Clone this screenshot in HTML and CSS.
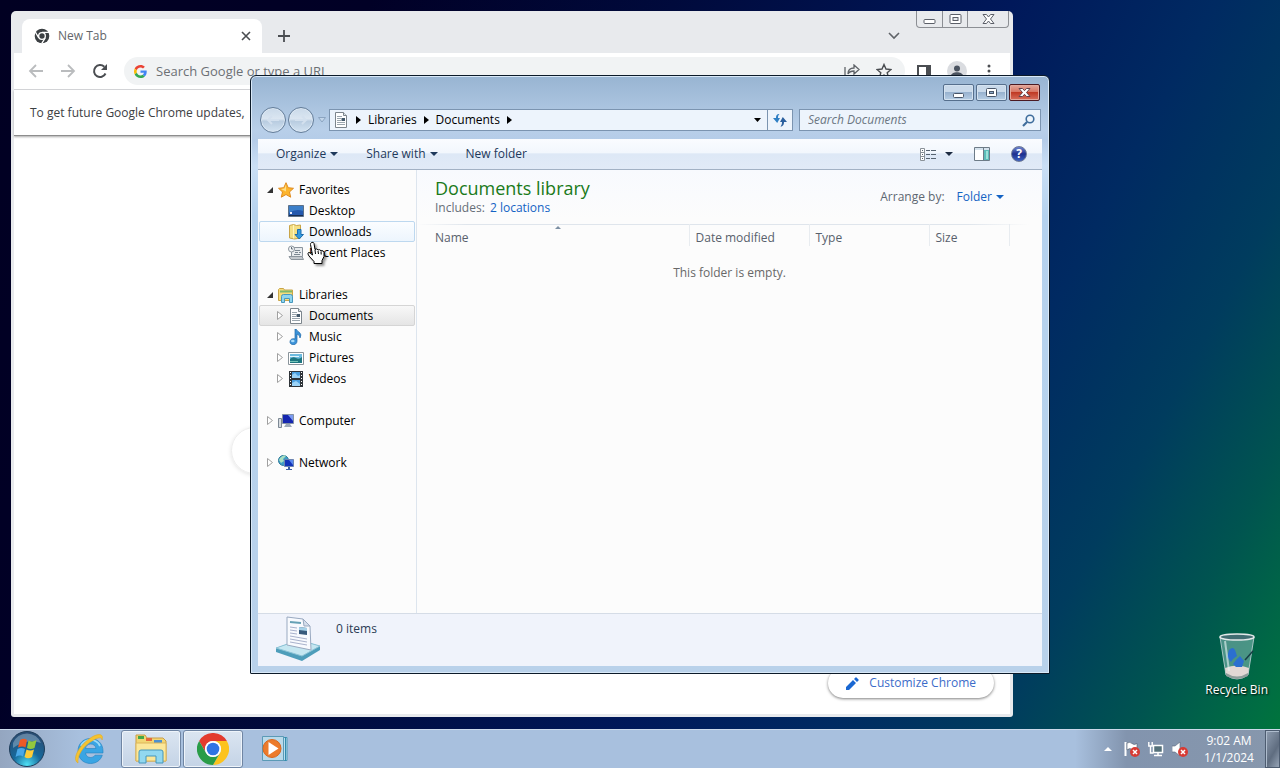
FILE: index.html
```html
<!DOCTYPE html>
<html lang="en">
<head>
    <meta charset="UTF-8">
    <meta name="viewport" content="width=device-width, initial-scale=1.0">
    <title>Desktop</title>
    <link rel="stylesheet" href="styles.css">
</head>
<body>
    <main class="desktop">
        <!-- Chrome window -->
        <section class="window chrome" aria-label="New Tab">
            <div class="tab-strip">
                <div class="tab">
                    <svg width="16" height="16" viewBox="0 0 48 48"><circle cx="24" cy="24" r="22" fill="#3c4043"/><circle cx="24" cy="24" r="10" fill="none" stroke="#fff" stroke-width="4"/><path d="M24 13h21M14.500 30 4 12M33.500 30 23 47" stroke="#fff" stroke-width="4"/></svg>
                    <span class="tab-title">New Tab</span>
                    <button class="icon-btn" aria-label="Close tab"><svg width="10" height="10" viewBox="0 0 10 10"><path d="M1 1l8 8M9 1L1 9" stroke="#4a4d51" stroke-width="1.600"/></svg></button>
                </div>
                <button class="icon-btn new-tab" aria-label="Open a new tab"><svg width="12" height="12" viewBox="0 0 12 12"><path d="M6 0v12M0 6h12" stroke="#4a4d51" stroke-width="1.800"/></svg></button>
                <button class="icon-btn tab-search" aria-label="Search tabs"><svg width="12" height="8" viewBox="0 0 12 8"><path d="M1 1l5 5 5-5" fill="none" stroke="#5f6368" stroke-width="1.600"/></svg></button>
                <div class="basic-caption">
                    <button aria-label="Minimize"><svg width="13" height="16" viewBox="0 0 13 16"><rect x="1" y="8.500" width="11" height="4" rx="1" fill="#fff" stroke="#5b5f68"/></svg></button>
                    <button aria-label="Maximize"><svg width="13" height="16" viewBox="0 0 13 16"><rect x="1" y="3.500" width="11" height="9" rx="1" fill="#fff" stroke="#5b5f68"/><rect x="4" y="6.500" width="5" height="3" fill="#e8eaed" stroke="#5b5f68"/></svg></button>
                    <button class="wide" aria-label="Close"><svg width="13" height="16" viewBox="0 0 13 16"><path d="M1 3.500h3.500l2 2.500 2-2.500H12L8.500 8l3.500 4.500H8.500l-2-2.500-2 2.500H1L4.500 8z" fill="#fff" stroke="#5b5f68"/></svg></button>
                </div>
            </div>
            <div class="chrome-toolbar">
                <button class="icon-btn" aria-label="Back"><svg width="16" height="16" viewBox="0 0 16 16"><path d="M15 8H2M8 2L2 8l6 6" fill="none" stroke="#babcbe" stroke-width="1.800"/></svg></button>
                <button class="icon-btn" aria-label="Forward"><svg width="16" height="16" viewBox="0 0 16 16"><path d="M1 8h13M8 2l6 6-6 6" fill="none" stroke="#babcbe" stroke-width="1.800"/></svg></button>
                <button class="icon-btn" aria-label="Reload"><svg width="16" height="16" viewBox="0 0 16 16"><path d="M13.500 10.500A6 6 0 1 1 12.300 3.800" fill="none" stroke="#4a4d51" stroke-width="2"/><path d="M15 1v6H9z" fill="#4a4d51"/></svg></button>
                <div class="omnibox">
                    <svg width="13" height="13" viewBox="0 0 48 48"><path fill="#ea4335" d="M24 9.500c3.540 0 6.710 1.220 9.210 3.600l6.850-6.850C35.900 2.380 30.470 0 24 0 14.620 0 6.510 5.380 2.560 13.220l7.980 6.190C12.430 13.720 17.740 9.500 24 9.500z"/><path fill="#4285f4" d="M46.980 24.550c0-1.570-.15-3.090-.38-4.550H24v9.020h12.940c-.58 2.960-2.260 5.480-4.780 7.180l7.730 6c4.510-4.180 7.090-10.360 7.090-17.650z"/><path fill="#fbbc05" d="M10.530 28.590c-.48-1.450-.76-2.990-.76-4.590s.27-3.140.76-4.590l-7.980-6.190C.92 16.460 0 20.120 0 24c0 3.880.92 7.540 2.560 10.780z"/><path fill="#34a853" d="M24 48c6.480 0 11.930-2.130 15.890-5.810l-7.730-6c-2.150 1.450-4.920 2.300-8.160 2.300-6.260 0-11.570-4.220-13.470-9.910l-7.980 6.190C6.510 42.620 14.620 48 24 48z"/></svg>
                    <input type="text" aria-label="Address" placeholder="Search Google or type a URL">
                    <button class="icon-btn" aria-label="Share"><svg width="16" height="14" viewBox="0 0 16 14"><path d="M1 3v10h11v-2M4 10c0-4 2-6 6-6V1l5 4.500-5 4.500V7C7 7 5 8 4 10z" fill="none" stroke="#5f6368" stroke-width="1.300"/></svg></button>
                    <button class="icon-btn" aria-label="Bookmark"><svg width="16" height="16" viewBox="0 0 16 16"><path d="M8 1.500l2 4.500 5 .5-3.800 3.200 1.200 4.800L8 12l-4.400 2.500 1.200-4.800L1 6.500 6 6z" fill="none" stroke="#4a4d51" stroke-width="1.400"/></svg></button>
                </div>
                <button class="icon-btn" aria-label="Side panel"><svg width="14" height="13" viewBox="0 0 14 13"><path d="M1 1h12v11H1z" fill="#fff" stroke="#4a4d51" stroke-width="2"/><path d="M9 1h4v11H9z" fill="#4a4d51"/></svg></button>
                <button class="icon-btn" aria-label="Profile"><svg width="20" height="20" viewBox="0 0 20 20"><circle cx="10" cy="10" r="10" fill="#dadce0"/><circle cx="10" cy="7.500" r="3" fill="#4a5360"/><path d="M4 15c0-5 12-5 12 0z" fill="#4a5360"/></svg></button>
                <button class="icon-btn" aria-label="Menu"><svg width="12" height="16" viewBox="0 0 12 16"><g fill="#4a4d51"><circle cx="6" cy="3" r="1.500"/><circle cx="6" cy="8" r="1.500"/><circle cx="6" cy="13" r="1.500"/></g></svg></button>
            </div>
            <p class="infobar">To get future Google Chrome updates,</p>
            <div class="new-tab-page">
                <div class="search-pill"></div>
                <button class="customize">
                    <svg width="13" height="13" viewBox="0 0 13 13"><path d="M0 13v-3l7-7 3 3-7 7zM8 2l1.500-1.500q.5-.5 1 0l2 2q.5.5 0 1L11 5z" fill="#1967d2"/></svg>
                    Customize Chrome
                </button>
            </div>
        </section>

        <!-- Explorer window -->
        <section class="window explorer" aria-label="Documents">
            <div class="caption">
                <button aria-label="Minimize"><svg width="13" height="15" viewBox="0 0 13 15"><rect x="1.500" y="8.500" width="10" height="4" rx="1" fill="#fff" stroke="#495669"/></svg></button>
                <button aria-label="Maximize"><svg width="13" height="15" viewBox="0 0 13 15"><rect x="1.500" y="3.500" width="10" height="8" rx="1" fill="#fff" stroke="#495669"/><rect x="4.500" y="6.500" width="4" height="2" fill="#8fabc9" stroke="#495669"/></svg></button>
                <button class="close" aria-label="Close"><svg width="13" height="15" viewBox="0 0 13 15"><path d="M1 3.500h3.500l2 2.200 2-2.200H12L8.500 7.500l3.500 4H8.500l-2-2.200-2 2.200H1l3.500-4z" fill="#fff" stroke="#62434c"/></svg></button>
            </div>
            <div class="nav-row">
                <div class="travel">
                    <button class="round" aria-label="Back"><svg width="14" height="12" viewBox="0 0 14 12"><path d="M13 6H2M6 2L2 6l4 4" fill="none" stroke="#d3e0ee" stroke-width="2"/></svg></button>
                    <button class="round" aria-label="Forward"><svg width="14" height="12" viewBox="0 0 14 12"><path d="M1 6h11M8 2l4 4-4 4" fill="none" stroke="#d3e0ee" stroke-width="2"/></svg></button>
                    <button class="icon-btn recent" aria-label="Recent pages"><svg width="8" height="6" viewBox="0 0 8 6"><path d="M.5.500h7L4 5z" fill="#c3d6ea" stroke="#8ba4c0"/></svg></button>
                </div>
                <div class="address">
                    <svg width="16" height="16" viewBox="0 0 16 16"><path d="M2.500.500h8l3 3v12h-11z" fill="#fff" stroke="#7c858c"/><path d="M10.500.500v3h3" fill="#dfe6ea" stroke="#7c858c"/><path d="M4 4.500h5M4 6.500h4M4 8.500h4M4 10.500h8M4 12.500h8" stroke="#9aa5ad"/><path d="M8.500 6h3.500v3H8.500z" fill="#43586a"/></svg>
                    <svg class="crumb-arrow" width="5" height="8" viewBox="0 0 5 8"><path d="M0 0l5 4-5 4z"/></svg>
                    <a href="#libraries">Libraries</a>
                    <svg class="crumb-arrow" width="5" height="8" viewBox="0 0 5 8"><path d="M0 0l5 4-5 4z"/></svg>
                    <a href="#documents">Documents</a>
                    <svg class="crumb-arrow" width="5" height="8" viewBox="0 0 5 8"><path d="M0 0l5 4-5 4z"/></svg>
                    <button class="icon-btn previous" aria-label="Previous locations"><svg width="7" height="4" viewBox="0 0 7 4"><path d="M0 0h7L3.500 4z"/></svg></button>
                    <button class="refresh" aria-label="Refresh"><svg width="14" height="14" viewBox="0 0 14 14"><path d="M6.500 1C3.500 1 3 3 3 5H0l4.200 5L7 5H5c0-2 .3-3 1.500-4z" fill="#2f7fc4"/><path d="M7.500 13.500C10.500 13.500 11 11 11 9h3L9.800 4 7 9h2c0 2-.3 3-1.500 4.500z" fill="#2a5f9e"/></svg></button>
                </div>
                <div class="search">
                    <input type="text" aria-label="Search Documents" placeholder="Search Documents">
                    <svg width="13" height="13" viewBox="0 0 13 13"><circle cx="8" cy="5" r="3.800" fill="#eef5fc" stroke="#3f6d9c" stroke-width="1.600"/><path d="M5 8l-4 4" stroke="#3f6d9c" stroke-width="2.200"/></svg>
                </div>
            </div>

            <div class="client">
                <div class="toolbar">
                    <button>Organize <i class="down"></i></button>
                    <button>Share with <i class="down"></i></button>
                    <button>New folder</button>
                    <div class="toolbar-right">
                        <button aria-label="Change your view"><svg width="16" height="13" viewBox="0 0 16 13"><path d="M.5.500h4v12h-4zM.5 4.500h4M.5 8.500h4" fill="#fff" stroke="#8a9299"/><path d="M6 2.500h4M11 2.500h5M6 6.500h4M11 6.500h5M6 10.500h4M11 10.500h5" stroke="#566370"/><path d="M2 2.500h1M2 6.500h1M2 10.500h1" stroke="#566370"/></svg><i class="down"></i></button>
                        <button aria-label="Show the preview pane"><svg width="16" height="14" viewBox="0 0 16 14"><path d="M.5.500h15v13H.5z" fill="#fff" stroke="#6d7b87"/><path d="M1 1h14v2H1z" fill="#d5e3ee"/><path d="M10 3h5v10h-5z" fill="#5dbdb9"/><path d="M9.500 1v12" stroke="#6d7b87"/><path d="M13 4v8" stroke="#9ce2d9" stroke-width="2"/></svg></button>
                        <button class="help" aria-label="Get help">?</button>
                    </div>
                </div>

                <div class="panes">
                    <nav class="tree">
                        <ul>
                            <li class="root"><svg width="6" height="6" viewBox="0 0 6 6"><path d="M6 0v6H0z" fill="#333"/></svg>
                                <svg width="16" height="16" viewBox="0 0 16 16"><path d="M8 .7l2.200 5 5.300.6-4 3.600 1.200 5.300L8 12.500l-4.700 2.700 1.200-5.300-4-3.600 5.300-.6z" fill="#fdb52c" stroke="#df8b20"/><path d="M8 2.500v7L3 7l3.500-.5z" fill="#fff0b0" opacity=".7"/></svg>
                                <a href="#favorites">Favorites</a></li>
                            <li><svg width="16" height="16" viewBox="0 0 16 16"><path d="M.5 2.500h15v11H.5z" fill="#2458ad" stroke="#5c7189"/><path d="M1 3h14v5Q8 5 1 10z" fill="#3c7fc9"/><path d="M1 12h14v1H1z" fill="#182c50"/><path d="M2 9h2v2H2z" fill="#eef"/></svg>
                                <a href="#desktop">Desktop</a></li>
                            <li class="hover"><svg width="16" height="16" viewBox="0 0 16 16"><path d="M1.500 1.500l4-1 3 1 4-.5v13l-6 1-5-1z" fill="#f4df84" stroke="#c9a548"/><path d="M5.500 1v13.500" stroke="#fff5bd"/><path d="M9.500 5.500h3.500v5h2.500L11.200 15 7 10.500h2.500z" fill="#359ae0" stroke="#1d6cac"/></svg>
                                <a href="#downloads">Downloads</a></li>
                            <li><svg width="16" height="16" viewBox="0 0 16 16"><path d="M3.500 2.500h11v9h-11z" fill="#e8ebee" stroke="#8b949c"/><path d="M1 11.500h13l1.500 3H3z" fill="#c3c8cd" stroke="#8b949c"/><path d="M7 5.500h5M7 7.500h3M11 7.500h2M6 9.500h6" stroke="#7b8791"/><circle cx="3.500" cy="4" r="3" fill="#f4f6f8" stroke="#8b949c"/><path d="M3.500 2v2H5" fill="none" stroke="#66717a"/></svg>
                                <a href="#recent">Recent Places</a></li>
                        </ul>
                        <ul>
                            <li class="root"><svg width="6" height="6" viewBox="0 0 6 6"><path d="M6 0v6H0z" fill="#333"/></svg>
                                <svg width="16" height="16" viewBox="0 0 16 16"><path d="M.5 13.500v-11l1-1h4l1 1.500h8v10.500z" fill="#f6dc7c" stroke="#c9a548"/><path d="M2 4.500h12" stroke="#7eb86c" stroke-width="2"/><path d="M3.500 15.500v-6q0-2 2-2h7q2 0 2 2v6h-3v-4h-5v4z" fill="#8ed5ef" stroke="#4898bd"/></svg>
                                <a href="#libraries">Libraries</a></li>
                            <li class="branch selected"><svg width="6" height="9" viewBox="0 0 6 9"><path d="M.5.500l5 4-5 4z" fill="#fff" stroke="#a0a0a0"/></svg>
                                <svg width="16" height="16" viewBox="0 0 16 16"><path d="M2.500.500h8l3 3v12h-11z" fill="#fff" stroke="#7c858c"/><path d="M10.500.500v3h3" fill="#dfe6ea" stroke="#7c858c"/><path d="M4 4.500h5M4 6.500h4M4 8.500h4M4 10.500h8M4 12.500h8" stroke="#9aa5ad"/><path d="M8.500 6h3.500v3H8.500z" fill="#43586a"/></svg>
                                <a href="#documents">Documents</a></li>
                            <li class="branch"><svg width="6" height="9" viewBox="0 0 6 9"><path d="M.5.500l5 4-5 4z" fill="#fff" stroke="#a0a0a0"/></svg>
                                <svg width="16" height="16" viewBox="0 0 16 16"><path d="M8 0q1 2 3.500 3.500Q14 5.500 12 9q0-3-3-4v7c0 5-7 4.500-7 1 0-3 3-4 5-3V0z" fill="#3b92d8" stroke="#1f68a8" stroke-width=".7"/><ellipse cx="4.800" cy="12" rx="1.800" ry="1.300" fill="#a7dbfa"/></svg>
                                <a href="#music">Music</a></li>
                            <li class="branch"><svg width="6" height="9" viewBox="0 0 6 9"><path d="M.5.500l5 4-5 4z" fill="#fff" stroke="#a0a0a0"/></svg>
                                <svg width="16" height="16" viewBox="0 0 16 16"><path d="M.5 2.500h15v12H.5z" fill="#fff" stroke="#8a949b"/><path d="M2 4h12v9H2z" fill="#6dbbe0"/><path d="M2 9q3-3 6-1t6-1v6H2z" fill="#1d7680"/><path d="M2 6.500h9" stroke="#e2f5fc"/><path d="M2 11.500h8" stroke="#74c4b7"/></svg>
                                <a href="#pictures">Pictures</a></li>
                            <li class="branch"><svg width="6" height="9" viewBox="0 0 6 9"><path d="M.5.500l5 4-5 4z" fill="#fff" stroke="#a0a0a0"/></svg>
                                <svg width="16" height="16" viewBox="0 0 16 16"><path d="M1 0h14v16H1z" fill="#2f3439"/><path d="M4 1h8v6H4zM4 9h8v6H4z" fill="#4a9fe0"/><path d="M4 4l3-2 3 3 2-1v3H4zM4 12l4-2 4 3v2H4z" fill="#9bd3f7"/><path d="M2.500 1v15M13.500 1v15" stroke="#fff" stroke-dasharray="1 2"/></svg>
                                <a href="#videos">Videos</a></li>
                        </ul>
                        <ul>
                            <li class="root"><svg width="6" height="9" viewBox="0 0 6 9"><path d="M.5.500l5 4-5 4z" fill="#fff" stroke="#a0a0a0"/></svg>
                                <svg width="16" height="16" viewBox="0 0 16 16"><path d="M4.500 1.500h11v9h-11z" fill="#1526b0" stroke="#8492a5"/><path d="M10 2h5v6z" fill="#7b9bf0"/><path d="M8 11h4l2 3H6z" fill="#9da9b8"/><path d="M.5 5.500h3v9h-3z" fill="#d6dbe0" stroke="#7c8894"/></svg>
                                <a href="#computer">Computer</a></li>
                        </ul>
                        <ul>
                            <li class="root"><svg width="6" height="9" viewBox="0 0 6 9"><path d="M.5.500l5 4-5 4z" fill="#fff" stroke="#a0a0a0"/></svg>
                                <svg width="16" height="16" viewBox="0 0 16 16"><circle cx="5.500" cy="5.500" r="5" fill="#3f9fc8" stroke="#2c7799"/><path d="M2 3q4-4 6-2L5 4l1 2-3 2-2-3z" fill="#a9dfc0"/><path d="M6.500 4.500h9v7h-9z" fill="#1233b8" stroke="#6c85b0"/><path d="M11 5h4v5z" fill="#5b8aef"/><path d="M10 12h2v2h2v1H8v-1h2z" fill="#3c5fa5"/></svg>
                                <a href="#network">Network</a></li>
                        </ul>
                    </nav>

                    <div class="library">
                        <div class="library-head">
                            <div>
                                <h1>Documents library</h1>
                                <p class="includes">Includes: <a href="#locations">2 locations</a></p>
                            </div>
                            <div class="arrange">Arrange by: <button>Folder <i class="down"></i></button></div>
                        </div>
                        <table>
                            <thead>
                                <tr>
                                    <th class="col-name">Name<i class="sort"></i></th>
                                    <th>Date modified</th>
                                    <th>Type</th>
                                    <th class="col-size">Size</th>
                                    <th class="col-rest"></th>
                                </tr>
                            </thead>
                        </table>
                        <p class="empty-message">This folder is empty.</p>
                    </div>
                </div>

                <footer class="details">
                    <svg width="46" height="46" viewBox="0 0 46 46"><path d="M1 32l23-8 21 6v4L27 45 1 36z" fill="#4d9dba"/><path d="M1 32l23-8 21 6-18 10z" fill="#c5e7f1" stroke="#8cc3d6"/><path d="M12 1l16 2 7 7 1 24-24-5z" fill="#f8fafe" stroke="#99a9c0"/><path d="M28 3l1 7h6z" fill="#d5deeb" stroke="#99a9c0"/><path d="M15 6l11 1" stroke="#66a1b5" stroke-width="2"/><path d="M15 11l7 1M15 14l7 1M15 17l7 1M15 20l17 3M15 23l17 3M15 26l17 3" stroke="#a9b2cc"/><path d="M24 11l8 1v7l-8-1z" fill="#375a7c"/><path d="M24 11l8 1v3l-8-1z" fill="#a5d0e7"/></svg>
                    <span>0 items</span>
                </footer>
            </div>
        </section>

        <a class="desktop-icon" href="#recycle">
            <svg width="38" height="48" viewBox="0 0 38 48"><path d="M2 4l6 38q11 8 22 0l6-38z" fill="#a5d0d0" fill-opacity=".45" stroke="#a8c5c5"/><path d="M7 35q12-5 24 0l-1 7q-11 7-22 0z" fill="#e2d8d5"/><path d="M8 40q11 7 22 0v3q-11 6-22 0z" fill="#8f9d9b"/><path d="M11 17q4-4 6 0l2 6-4 3-2 3-4-5zM18 27l4-4 4 5-2 6h-6l-3-3z" fill="#2b6fd0"/><path d="M27 27l8-9" stroke="#173f45" stroke-width="1.500"/><path d="M7 8l4 30" stroke="#e8f6f5" stroke-width="2" opacity=".6"/><ellipse cx="19" cy="4" rx="17" ry="3" fill="#416d72" stroke="#e3e9e9" stroke-width="1.500"/></svg>
            <span>Recycle Bin</span>
        </a>

        <svg class="cursor" width="20" height="24" viewBox="0 0 20 24"><path d="M5.500 1.500q2-1 2.500 1l1 6q2-1.500 3 .5 2-1 3 .8 2.500-.8 3 1.700v4l-2 4v3H8v-2l-5-5.500q-2-2.500-.5-3.500 1-.6 4 2.500l-2-10.500q0-1.500 1-2z" fill="#fff" stroke="#000"/><path d="M9 9l.5 4M12 10l.5 3M15 10.500l.2 3" stroke="#000"/></svg>
    </main>

    <footer class="taskbar">
        <button class="start" aria-label="Start">
            <svg width="38" height="38" viewBox="0 0 38 38"><defs><radialGradient id="orb" cx=".5" cy=".95" r=".9"><stop offset="0" stop-color="#4fe0f5"/><stop offset=".45" stop-color="#16699c"/><stop offset="1" stop-color="#294d74"/></radialGradient></defs><circle cx="19" cy="19" r="17.500" fill="url(#orb)" stroke="#1e3c59"/><path d="M5 13a15 15 0 0 1 28 0q-14-5-28 5z" fill="#cfe2f0" opacity=".35"/><path d="M12 10q4-2.500 7 0l-1.500 7.500q-3-2-7.500 0z" fill="#ec5a26"/><path d="M20.500 10.500q4 2 8-.5l-2 8q-4 2-7.500 0z" fill="#93c83e"/><path d="M9.500 19q4-2 7.500 0l-2 7.500q-3-2-7.500.5z" fill="#49a8e8"/><path d="M18.500 19.500q4 2 7.500 0l-2 7.500q-4 2.500-7.500 0z" fill="#fdcc38"/></svg>
        </button>
        <button class="task" aria-label="Internet Explorer">
            <svg width="32" height="32" viewBox="0 0 32 32"><path d="M30 20H12.500c.5 3 2.500 4.500 5 4.500 2 0 3.500-.8 4.500-2.300h7.300C27.500 27.500 23 30.500 17.500 30.500 10 30.500 5 25 5 18S10 5.500 17.500 5.500 30 11 30 18zM23 15.500c-.5-2.800-2.500-4.500-5.300-4.500s-4.700 1.700-5.200 4.500z" fill="#3aa5e4" fill-rule="evenodd" stroke="#2480bd" stroke-width=".6"/><path d="M8 13a10.500 10.500 0 0 1 19 0" fill="none" stroke="#9cdaf8" stroke-width="1.800"/><path d="M5 30C-2 26 7 11 19 4c7-4 12-3 10 3 0-3-4-3-10 1C10 13 4 23 5 30z" fill="#f5c331" stroke="#e0a921" stroke-width=".6"/></svg>
        </button>
        <button class="task open" aria-label="Windows Explorer">
            <svg width="34" height="32" viewBox="0 0 34 32"><path d="M2 28V2h9l2 3h16l3 3v20z" fill="#f2d673" stroke="#c99d47"/><path d="M4 3h6v3H4z" fill="#43a848"/><path d="M12 5h6v3h-6z" fill="#e46a3c"/><path d="M20 7h8v3h-8z" fill="#4d91d0"/><path d="M2 10h30v18H2z" fill="#fbe79a" stroke="#dcb65b"/><path d="M5 30V19q0-2 2-2h20q2 0 2 2v11h-7v-7H12v7z" fill="#92d8f0" stroke="#4596bb"/></svg>
        </button>
        <button class="task open" aria-label="Google Chrome">
            <svg width="32" height="32" viewBox="0 0 48 48"><path fill="#e33b2e" d="M24 12h20.800A24 24 0 0 0 3.200 12l10.400 18A12 12 0 0 1 24 12z"/><path fill="#fcc31e" d="M34.400 30L24 48a24 24 0 0 0 20.800-36H24a12 12 0 0 1 10.400 18z"/><path fill="#2a9c48" d="M13.600 30L3.200 12A24 24 0 0 0 24 48l10.400-18a12 12 0 0 1-20.800 0z"/><circle cx="24" cy="24" r="12" fill="#fff"/><circle cx="24" cy="24" r="9.500" fill="#2f74e4"/></svg>
        </button>
        <button class="task" aria-label="Windows Media Player">
            <svg width="28" height="28" viewBox="0 0 28 28"><path d="M5 2.500h21v23H5z" fill="#b8dff0" stroke="#4897b5"/><path d="M1.500 1.500h21v24h-21z" fill="#b9daea" stroke="#5b9ab6"/><path d="M24.500 2v24" stroke="#338bad"/><circle cx="11" cy="13.500" r="9" fill="#ec7b2b" stroke="#d9661d"/><path d="M7.500 7l10 6.500-10 6.500z" fill="#fff"/></svg>
        </button>
        <div class="tray">
            <div class="tray-icons">
                <button aria-label="Show hidden icons"><svg width="8" height="4" viewBox="0 0 8 4"><path d="M0 4h8L4 0z" fill="#fff"/></svg></button>
                <button aria-label="Action Center"><svg width="16" height="16" viewBox="0 0 16 16"><path d="M1.500 1v14" stroke="#fff" stroke-width="2"/><path d="M3 2q3-1.500 5 .5t5 0V9q-3 1.500-5-.5T3 9z" fill="#fff" stroke="#4d5a6d" stroke-width=".6"/><circle cx="11" cy="11" r="5" fill="#d73b34"/><path d="M9 9l4 4M13 9l-4 4" stroke="#fff" stroke-width="1.500"/></svg></button>
                <button aria-label="Network"><svg width="16" height="16" viewBox="0 0 16 16"><path d="M5.500 4.500h9v7h-9z" fill="#55717a" stroke="#fff" stroke-width="1.500"/><path d="M10 12v2M6 14.500h8" stroke="#fff" stroke-width="1.500"/><path d="M.8 1v4h3.400V1M2.500 5v7h3" fill="none" stroke="#fff" stroke-width="1.400"/></svg></button>
                <button aria-label="Volume"><svg width="16" height="16" viewBox="0 0 16 16"><path d="M0 5h3l5-4v14l-5-4H0z" fill="#fff" stroke="#59677a" stroke-width=".6"/><circle cx="11" cy="11" r="5" fill="#d73b34"/><path d="M9 9l4 4M13 9l-4 4" stroke="#fff" stroke-width="1.500"/></svg></button>
            </div>
            <time class="clock">9:02 AM<br>1/1/2024</time>
            <button class="show-desktop" aria-label="Show desktop"></button>
        </div>
    </footer>
</body>
</html>
```
FILE: styles.css
```css
* {
    margin: 0;
    padding: 0;
    box-sizing: border-box;
}

body {
    display: flex;
    flex-direction: column;
    height: 100vh;
    overflow: hidden;
    font-family: 'Open Sans', 'Noto Sans', sans-serif;
    font-size: 12px;
    line-height: 16px;
    color: #000;
    background: linear-gradient(118deg, #010022 0%, #010026 22%, #000a3c 40%, #00185a 60%, #002a62 72%, #003c5e 82%, #005450 90%, #006e42 97%, #007838 100%);
}

button {
    font: inherit;
    color: inherit;
    background: none;
    border: none;
    cursor: pointer;
}

input {
    font: inherit;
    background: none;
    border: none;
    outline: none;
    min-width: 0;
}

a {
    color: inherit;
    text-decoration: none;
}

ul {
    list-style: none;
}

svg {
    display: block;
    flex: none;
}

.icon-btn {
    display: flex;
    align-items: center;
    justify-content: center;
}

.down {
    display: inline-block;
    border: 4px solid transparent;
    border-top-color: currentColor;
    border-bottom: none;
}

.desktop {
    flex: 1;
    min-height: 0;
    position: relative;
}

.window {
    position: absolute;
    isolation: isolate;
    display: flex;
    flex-direction: column;
}

/* Chrome window */
.chrome {
    inset: 11px 267px 12px 11px;
    padding: 0 3px 3px;
    background: #e8eaed;
    border-radius: 5px 5px 3px 3px;
    overflow: hidden;
}

.tab-strip {
    display: flex;
    align-items: flex-start;
    height: 42px;
    padding: 0 1px 0 8px;
}

.tab {
    display: flex;
    align-items: center;
    width: 240px;
    height: 34px;
    margin-top: 8px;
    padding: 0 11px 0 12px;
    background: #fff;
    border-radius: 8px 8px 0 0;
}

.tab-title {
    flex: 1;
    padding-left: 8px;
    color: #63666a;
}

.new-tab {
    width: 28px;
    height: 34px;
    margin: 8px 0 0 8px;
}

.tab-search {
    width: 28px;
    height: 34px;
    margin: 8px 8px 0 auto;
}

.basic-caption {
    display: flex;
    height: 17px;
    border: 1px solid #8c8f94;
    border-top: none;
    border-radius: 0 0 4px 4px;
}

.basic-caption button {
    display: flex;
    justify-content: center;
    width: 25px;
}

.basic-caption button + button {
    border-left: 1px solid #8c8f94;
}

.basic-caption .wide {
    width: 41px;
}

.chrome-toolbar {
    display: flex;
    align-items: center;
    gap: 16px;
    height: 37px;
    padding: 0 15px 0 14px;
    background: #fff;
    border-bottom: 1px solid #d5d7da;
}

.omnibox {
    display: flex;
    align-items: center;
    gap: 16px;
    flex: 1;
    height: 28px;
    margin-right: -4px;
    padding: 0 13px 0 10px;
    background: #f1f3f4;
    border-radius: 14px;
}

.omnibox svg + input {
    flex: 1;
    margin-left: -7px;
    font-size: 13px;
}

.omnibox input::placeholder {
    color: #6c7074;
}

.infobar {
    height: 46px;
    padding: 0 16px;
    font-size: 12px;
    line-height: 46px;
    color: #3c4043;
    background: #fff;
    border-bottom: 1px solid #8d8d8d;
    box-shadow: 0 1px 2px #aaa;
    z-index: 1;
}

.new-tab-page {
    flex: 1;
    display: flex;
    flex-direction: column;
    align-items: center;
    justify-content: space-between;
    padding-top: 291px;
    background: #fff;
}

.search-pill {
    width: 562px;
    height: 47px;
    border: 1px solid #ededed;
    border-radius: 24px;
    box-shadow: 0 1px 4px #e2e2e2;
}

.customize {
    display: flex;
    align-items: center;
    align-self: flex-end;
    gap: 10px;
    height: 30px;
    margin: 0 16px 16px 0;
    padding: 0 18px;
    font-size: 12px;
    color: #3b6cc9;
    background: #fff;
    border-radius: 16px;
    box-shadow: 0 1px 3px rgba(0, 0, 0, 0.5);
}

/* Explorer window */
.explorer {
    inset: 75px 230px 55px 250px;
    padding: 8px 7px 7px;
    background: linear-gradient(#98b4d2 0, #b8cfe9 54px, #b4cce8 64px, #cadff5 90px, #b5d2ee 140px, #b9d1ea 100%);
    border: 1px solid #0c1a29;
    border-radius: 6px 6px 1px 1px;
    box-shadow: inset 0 0 0 1px #d9e9f8;
}

.caption {
    display: flex;
    justify-content: flex-end;
    gap: 2px;
    padding-right: 2px;
}

.caption button {
    display: flex;
    justify-content: center;
    width: 31px;
    height: 17px;
    background: linear-gradient(#c9d9ea 45%, #98b2cf 50%, #b8cfe6);
    border: 1px solid #566f8d;
    border-radius: 2px;
    box-shadow: inset 0 0 0 1px #d4e2f0;
}

.caption .close {
    background: linear-gradient(#e3a99c 0, #d87664 45%, #c03a24 50%, #d8705e);
    border-color: #4b1a22;
    box-shadow: inset 0 0 0 1px #e3a99d;
}

.nav-row {
    display: flex;
    align-items: center;
    margin: 6px 1px 6px 2px;
}

.travel {
    display: flex;
    align-items: center;
    gap: 2px;
    width: 69px;
}

.round {
    display: flex;
    align-items: center;
    justify-content: center;
    width: 26px;
    height: 26px;
    background: linear-gradient(#c9d9e9 0, #dbe6f1 45%, #b8cce0 55%, #d3e3f2);
    border: 1px solid #647d99;
    border-radius: 50%;
    box-shadow: inset 0 0 0 1px #dce8f4;
}

.recent {
    margin-left: 2px;
}

.address,
.search {
    display: flex;
    align-items: center;
    height: 22px;
    background: #edf4fc;
    border: 1px solid #7b94b0;
}

.address {
    flex: 1;
    padding-left: 3px;
}

.address a {
    margin: 0 7px;
}

.address svg + .crumb-arrow {
    margin-left: 7px;
}

.previous {
    width: 20px;
    height: 20px;
    margin-left: auto;
}

.refresh {
    display: flex;
    align-items: center;
    justify-content: center;
    width: 25px;
    height: 20px;
    border-left: 1px solid #7b94b0;
}

.search {
    width: 242px;
    margin-left: 6px;
    padding: 0 5px 0 8px;
}

.search input {
    flex: 1;
    font-style: italic;
}

.search input::placeholder {
    color: #6b7682;
}

.client {
    flex: 1;
    min-height: 0;
    display: flex;
    flex-direction: column;
    background: #fcfcfc;
}

.toolbar {
    display: flex;
    align-items: center;
    gap: 28px;
    height: 31px;
    padding: 0 15px 0 18px;
    color: #1e395b;
    background: linear-gradient(#fafcff 0, #f2f7fd 45%, #dde8f6 50%, #e1eaf7 100%);
    border-bottom: 1px solid #a2b1c4;
}

.toolbar button {
    display: flex;
    align-items: center;
    gap: 4px;
}

.toolbar-right {
    display: flex;
    align-items: center;
    gap: 21px;
    margin-left: auto;
    color: #1c2b42;
}

.toolbar-right .down {
    margin-left: 5px;
}

.toolbar .help {
    justify-content: center;
    width: 16px;
    height: 16px;
    font-weight: bold;
    color: #fff;
    background: linear-gradient(#6d84cf, #1d2f8f 50%, #3d62c0);
    border: 1px solid #6c7896;
    border-radius: 50%;
}

.panes {
    flex: 1;
    display: flex;
    min-height: 0;
}

.tree {
    width: 159px;
    padding: 9px 1px;
    border-right: 1px solid #dde5ee;
}

.tree ul {
    margin-bottom: 21px;
}

.tree li {
    display: flex;
    align-items: center;
    gap: 5px;
    height: 21px;
    padding-left: 28px;
    border: 1px solid transparent;
    border-radius: 2px;
}

.tree .root {
    padding-left: 7px;
}

.tree .branch {
    padding-left: 17px;
}

.tree .hover {
    background: linear-gradient(#fbfdff, #edf5fd);
    border-color: #bdd8ef;
}

.tree .selected {
    background: linear-gradient(#f8f8f8, #e5e5e5);
    border-color: #d5d5d5;
}

.library {
    flex: 1;
    min-width: 0;
    background: linear-gradient(#f8fafe, #fcfcfc 50px);
}

.library-head {
    display: flex;
    justify-content: space-between;
    height: 54px;
    padding: 6px 38px 0 18px;
}

h1 {
    font-size: 18px;
    font-weight: normal;
    line-height: 24px;
    color: #1a7a1a;
}

.includes {
    color: #666e78;
}

.includes a {
    margin-left: 2px;
}

.includes a,
.arrange button {
    color: #1463c4;
}

.arrange {
    display: flex;
    align-items: center;
    align-self: flex-start;
    gap: 12px;
    padding-top: 13px;
    color: #5e6772;
}

.arrange button {
    display: flex;
    align-items: center;
    gap: 4px;
}

table {
    width: 100%;
    table-layout: fixed;
    border-collapse: collapse;
    background: linear-gradient(90deg, #fcfcfc, #dfe5ec 8%, #dfe5ec 88%, #fcfcfc 98%) top / 100% 1px no-repeat;
}

th {
    width: 120px;
    height: 22px;
    padding: 6px 0 0 6px;
    font-weight: normal;
    line-height: 16px;
    text-align: left;
    color: #58616c;
    border-right: 1px solid #e8ecf0;
}

.col-name {
    width: auto;
    position: relative;
    padding-left: 18px;
}

.sort {
    position: absolute;
    top: 2px;
    left: 51%;
    border: 3px solid transparent;
    border-top: none;
    border-bottom-color: #7d8fa3;
}

.col-size {
    width: 80px;
}

.col-rest {
    width: 33px;
    border: none;
}

.empty-message {
    padding-top: 19px;
    text-align: center;
    color: #686868;
}

.details {
    display: flex;
    gap: 15px;
    height: 53px;
    padding: 2px 17px 0;
    font-size: 12px;
    line-height: 26px;
    color: #2b3c55;
    background: #f0f3fb;
    border-top: 1px solid #d5dce6;
}

.desktop-icon {
    position: absolute;
    right: 12px;
    bottom: 31px;
    display: flex;
    flex-direction: column;
    align-items: center;
    gap: 1px;
    color: #fff;
    text-shadow: 1px 1px 2px #000;
}

.cursor {
    position: absolute;
    left: 306px;
    top: 241px;
    filter: drop-shadow(2px 2px 1px rgba(0, 0, 0, 0.4));
}

/* Taskbar */
.taskbar {
    display: flex;
    height: 39px;
    background: linear-gradient(90deg, #94a6c0 0, #a8c0de 80px, #a8c0de 84%, #8294ae 88%, #8797ac 100%);
    border-top: 1px solid #cbd9ea;
}

.start {
    width: 54px;
    padding-left: 8px;
}

.task {
    display: flex;
    align-items: center;
    justify-content: center;
    width: 60px;
    margin-right: 2px;
}

.start + .task {
    margin-left: 5px;
}

.open {
    background: linear-gradient(#dbe5f1, #c4d3e6);
    border: 1px solid #6f85a3;
    border-radius: 3px;
    box-shadow: inset 0 0 0 1px #eef4fa;
}

.tray {
    display: flex;
    align-items: center;
    margin-left: auto;
    color: #fff;
}

.tray-icons {
    display: flex;
    align-items: center;
    gap: 8px;
    padding-right: 5px;
}

.tray-icons button:first-child {
    margin-right: 4px;
}

.clock {
    width: 72px;
    text-align: center;
    line-height: 17px;
}

.show-desktop {
    align-self: stretch;
    width: 15px;
    background: linear-gradient(120deg, #8f9db0, #5f6d80 60%, #95a3b5);
    border: 1px solid #4d5c70;
    box-shadow: inset 1px 1px #aebccd;
}
```
